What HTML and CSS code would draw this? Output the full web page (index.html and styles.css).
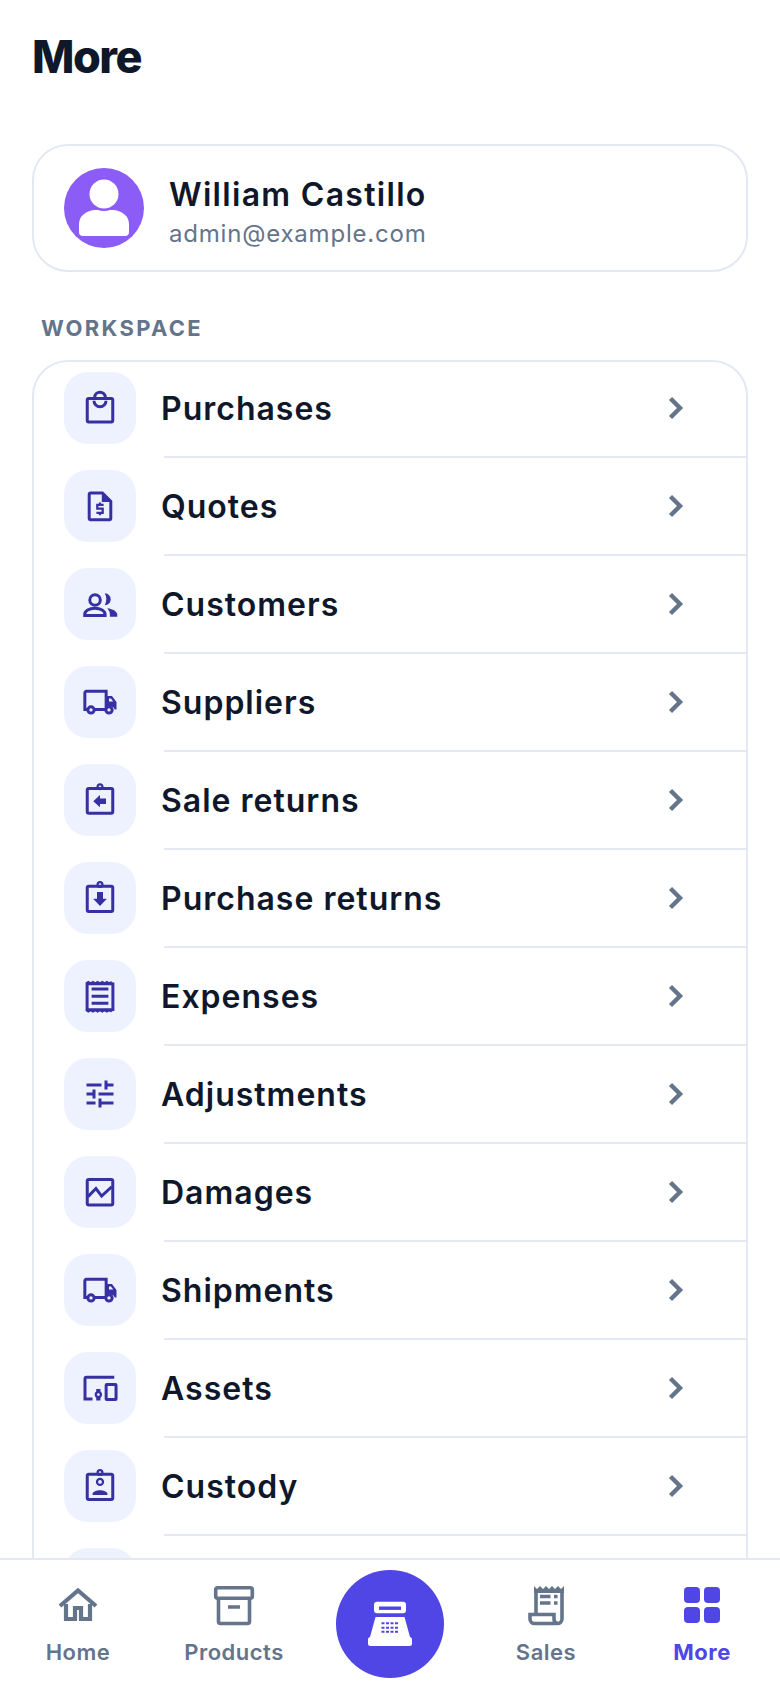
FILE: index.html
```html
<!DOCTYPE html>
<html lang="en">
<head>
<meta charset="utf-8">
<title>More</title>
<link rel="stylesheet" href="styles.css">
</head>
<body>
<div class="app">
  <main class="main">
    <h1 class="title">More</h1>
    <section class="profile">
      <svg class="avatar" viewBox="0 0 80 80">
        <circle cx="40" cy="40" r="40" fill="#8b5cf6"/>
        <path d="M15 64V56C15 48 22 43 30 42H50C58 43 65 48 65 56V64A4 4 0 0 1 61 68H19A4 4 0 0 1 15 64Z" fill="#fff"/>
        <circle cx="40" cy="26" r="17" fill="#8b5cf6"/>
        <circle cx="40" cy="26" r="14.5" fill="#fff"/>
      </svg>
      <div class="who">
        <div class="name">William Castillo</div>
        <div class="email">admin@example.com</div>
      </div>
    </section>
    <div class="section-label">WORKSPACE</div>
    <section class="list">
      <div class="row">
        <div class="tile"><svg class="ico" viewBox="0 0 24 24"><rect class="ln" x="3.500" y="5.700" width="17" height="15.700" rx="1"/><path class="ln" d="M8.500 5.700V4.800a3.500 3.300 0 0 1 7 0v.9M8 7.200a4 4 0 0 0 8 0"/></svg></div>
        <span class="label">Purchases</span>
        <svg class="chev" viewBox="0 0 28 28"><path d="M8.500 4.500l9.500 9.500-9.500 9.500"/></svg>
      </div>
      <div class="row">
        <div class="tile"><svg class="ico" viewBox="0 0 24 24"><path class="ln" d="M5.800 3.300h7.800l5.600 5.600v11.200a1 1 0 0 1-1 1H5.800a1 1 0 0 1-1-1V4.300a1 1 0 0 1 1-1z"/><path class="fl" d="M13.200 3.300h1l5 5v1h-6z"/><path class="ln thin" d="M14.400 11.200h-4.200v2.600h3.600v2.700H9.600M12 9.600v1.600M12 16.500v1.600"/></svg></div>
        <span class="label">Quotes</span>
        <svg class="chev" viewBox="0 0 28 28"><path d="M8.500 4.500l9.500 9.500-9.500 9.500"/></svg>
      </div>
      <div class="row">
        <div class="tile"><svg class="ico" viewBox="0 0 24 24"><circle class="ln" cx="8.700" cy="9.300" r="3.500"/><path class="ln" d="M1.800 19.700V19c0-2.500 3-4.200 6.800-4.200s6.800 1.700 6.800 4.200v.7z"/><path class="fl" d="M15.200 4.900a3.950 3.950 0 0 1 0 7.900a8.500 8.500 0 0 0 0-7.900z"/><path class="fl" d="M16.800 14.800c3.900.5 6.700 2.200 6.700 4.200v1.500h-4.900V19c0-1.600-.6-3-1.800-4.200z"/></svg></div>
        <span class="label">Customers</span>
        <svg class="chev" viewBox="0 0 28 28"><path d="M8.500 4.500l9.500 9.500-9.500 9.500"/></svg>
      </div>
      <div class="row">
        <div class="tile"><svg class="ico" viewBox="0 0 24 24"><path class="ln" d="M3.800 17H1.900V5.900a1 1 0 0 1 1-1h13.200V17H8.200"/><path class="fl" d="M16 8h4l3 4v5h-1.200a3 3 0 0 0-5.600 0H16z"/><path class="notch" d="M18 9.600h1.300l1.500 2.100H18z"/><circle class="ln wheel" cx="6" cy="17.300" r="2.100"/><circle class="ln wheel" cx="18" cy="17.300" r="2.100"/></svg></div>
        <span class="label">Suppliers</span>
        <svg class="chev" viewBox="0 0 28 28"><path d="M8.500 4.500l9.500 9.500-9.500 9.500"/></svg>
      </div>
      <div class="row">
        <div class="tile"><svg class="ico" viewBox="0 0 24 24"><rect class="ln" x="3.500" y="4.400" width="17" height="16.400" rx="1"/><circle class="ln thin" cx="12" cy="3.200" r="1.600"/><path class="fl" d="M7.500 12.800L12 8.700V11h4v3.600h-4v2.300z"/></svg></div>
        <span class="label">Sale returns</span>
        <svg class="chev" viewBox="0 0 28 28"><path d="M8.500 4.500l9.500 9.500-9.500 9.500"/></svg>
      </div>
      <div class="row">
        <div class="tile"><svg class="ico" viewBox="0 0 24 24"><rect class="ln" x="3.500" y="4.200" width="17" height="16.800" rx="1"/><circle class="ln thin" cx="12" cy="3" r="1.600"/><path class="fl" d="M10 8h4v4.500h2.600L12 17.300l-4.600-4.800H10z"/></svg></div>
        <span class="label">Purchase returns</span>
        <svg class="chev" viewBox="0 0 28 28"><path d="M8.500 4.500l9.500 9.500-9.500 9.500"/></svg>
      </div>
      <div class="row">
        <div class="tile"><svg class="ico" viewBox="0 0 24 24"><path class="ln" d="M3.400 3v19M20.600 3v19M3.400 3.800h17.200M3.400 21.200h17.200M6.400 7.300h11.200M6.400 12.100h11.200M6.400 16.900h11.200"/><path class="ln hair" d="M2.700 3.400l1.500-1 1.600 1 1.500-1 1.600 1 1.500-1 1.600 1 1.500-1 1.600 1 1.500-1 1.600 1 1.500-1M2.700 21.600l1.500 1 1.600-1 1.500 1 1.600-1 1.500 1 1.600-1 1.500 1 1.600-1 1.500 1 1.600-1 1.500 1"/></svg></div>
        <span class="label">Expenses</span>
        <svg class="chev" viewBox="0 0 28 28"><path d="M8.500 4.500l9.500 9.500-9.500 9.500"/></svg>
      </div>
      <div class="row">
        <div class="tile"><svg class="ico" viewBox="0 0 24 24"><path class="fl" d="M3 17v2h6v-2H3zM3 5v2h10V5H3zM13 21v-2h8v-2h-8v-2h-2v6h2zM7 9v2H3v2h4v2h2V9H7zM21 13v-2H11v2h10zM15 9h2V7h4V5h-4V3h-2v6z"/></svg></div>
        <span class="label">Adjustments</span>
        <svg class="chev" viewBox="0 0 28 28"><path d="M8.500 4.500l9.500 9.500-9.500 9.500"/></svg>
      </div>
      <div class="row">
        <div class="tile"><svg class="ico" viewBox="0 0 24 24"><rect class="ln" x="3.500" y="3.700" width="17" height="17" rx="1"/><path class="ln" d="M4 15.100l5.300-5.400 3.800 5 6.700-6.200"/></svg></div>
        <span class="label">Damages</span>
        <svg class="chev" viewBox="0 0 28 28"><path d="M8.500 4.500l9.500 9.500-9.500 9.500"/></svg>
      </div>
      <div class="row">
        <div class="tile"><svg class="ico" viewBox="0 0 24 24"><path class="ln" d="M3.800 17H1.900V5.900a1 1 0 0 1 1-1h13.200V17H8.200"/><path class="fl" d="M16 8h4l3 4v5h-1.200a3 3 0 0 0-5.600 0H16z"/><path class="notch" d="M18 9.600h1.300l1.500 2.100H18z"/><circle class="ln wheel" cx="6" cy="17.300" r="2.100"/><circle class="ln wheel" cx="18" cy="17.300" r="2.100"/></svg></div>
        <span class="label">Shipments</span>
        <svg class="chev" viewBox="0 0 28 28"><path d="M8.500 4.500l9.500 9.500-9.500 9.500"/></svg>
      </div>
      <div class="row">
        <div class="tile"><svg class="ico" viewBox="0 0 24 24"><path class="ln" d="M21.500 4.800H3a1 1 0 0 0-1 1v13.600h5"/><rect class="ln" x="16.100" y="9.700" width="6.600" height="10" rx=".4"/><circle class="ln thin" cx="10.900" cy="16.400" r="1.700"/><path class="fl" d="M9.500 12.600h2.800v2.200H9.500zM9.500 18.200h2.800v2.200H9.500z"/></svg></div>
        <span class="label">Assets</span>
        <svg class="chev" viewBox="0 0 28 28"><path d="M8.500 4.500l9.500 9.500-9.500 9.500"/></svg>
      </div>
      <div class="row">
        <div class="tile"><svg class="ico" viewBox="0 0 24 24"><rect class="ln" x="3.500" y="4.200" width="17" height="16.800" rx="1"/><circle class="ln thin" cx="12" cy="3" r="1.600"/><circle class="ln thin" cx="12" cy="9.300" r="2"/><path class="fl" d="M7 18v-.6c0-1.600 3-2.600 5-2.600s5 1 5 2.600v.6z"/></svg></div>
        <span class="label">Custody</span>
        <svg class="chev" viewBox="0 0 28 28"><path d="M8.500 4.500l9.500 9.500-9.500 9.500"/></svg>
      </div>
      <div class="row"><div class="tile"></div></div>
    </section>
  </main>
  <nav class="nav">
    <a class="tab">
      <svg class="tab-ico" viewBox="0 0 48 48"><path class="tab-ln heavy" d="M12 23V38H21V27H27V38H36V23"/><path class="tab-ln heavy" d="M6 25L24 9.500 42 25"/></svg>
      <span class="tab-text">Home</span>
    </a>
    <a class="tab">
      <svg class="tab-ico" viewBox="0 0 48 48"><rect class="tab-ln" x="5.700" y="6.700" width="36.600" height="10.600" rx="2"/><path class="tab-ln" d="M8.500 17.300V40.500a2 2 0 0 0 2 2H37.500a2 2 0 0 0 2-2V17.300M18 26H30"/></svg>
      <span class="tab-text">Products</span>
    </a>
    <div class="fab-cell">
      <button class="fab" type="button" aria-label="Point of sale">
        <svg class="fab-ico" viewBox="0 0 48 48">
          <rect x="8" y="1.700" width="32" height="11.600" rx="3" fill="#fff"/>
          <rect x="13" y="6.500" width="22" height="3.400" fill="#4f46e5"/>
          <path d="M9.500 17H38.500L44 37H4Z" fill="#fff"/>
          <rect x="2" y="37" width="44" height="9" rx="2.500" fill="#fff"/>
          <path d="M15.500 22.300h3v2h-3zM20 22.300h3v2h-3zM24.500 22.300h3v2h-3zM29 22.300h3v2h-3zM15.500 26.700h3v2h-3zM20 26.700h3v2h-3zM24.500 26.700h3v2h-3zM29 26.700h3v2h-3zM15.500 30.700h3v2h-3zM20 30.700h3v2h-3zM24.500 30.700h3v2h-3zM29 30.700h3v2h-3z" fill="#4f46e5"/>
        </svg>
      </button>
    </div>
    <a class="tab">
      <svg class="tab-ico" viewBox="0 0 48 48"><path class="tab-ln" d="M14 33V8M40 8V38a4.500 4.500 0 0 1-4.500 4.500H12.500A4.500 4.500 0 0 1 8 38V33.500H32V38a4.500 4.500 0 0 0 3.500 4.500"/><path class="tab-fill" d="M12 5l3 3 3-3 3 3 3-3 3 3 3-3 3 3 3-3 3 3 3-3v7H12z"/><path class="tab-ln" d="M18 15.500H28.500M18 22H28.500M32 15.500H35.500M32 22H35.500"/></svg>
      <span class="tab-text">Sales</span>
    </a>
    <a class="tab tab-active">
      <svg class="tab-ico" viewBox="0 0 48 48"><rect class="tab-fill" x="6" y="6" width="16" height="16" rx="4"/><rect class="tab-fill" x="26" y="6" width="16" height="16" rx="4"/><rect class="tab-fill" x="6" y="26" width="16" height="16" rx="4"/><rect class="tab-fill" x="26" y="26" width="16" height="16" rx="4"/></svg>
      <span class="tab-text">More</span>
    </a>
  </nav>
</div>
</body>
</html>
```
FILE: styles.css
```css
* { box-sizing: border-box; }
html, body { margin: 0; height: 100%; }
body { background: #fff; color: #0f172a; font-family: Inter, "Liberation Sans", sans-serif; }
.app { height: 1688px; display: flex; flex-direction: column; overflow: hidden; }
.main { flex: 1; min-height: 0; overflow: hidden; padding: 27px 32px 0; }
.title { margin: 0; font-size: 45px; line-height: 60px; font-weight: 800; letter-spacing: -1.5px; }
.profile { margin-top: 57px; height: 128px; display: flex; align-items: center; gap: 25px; padding: 0 30px; border: 2px solid #e4e8f2; border-radius: 36px; }
.avatar { width: 80px; height: 80px; flex: none; }
.who { display: flex; flex-direction: column; gap: 5px; margin-top: 8px; }
.name { font-size: 32px; line-height: 38px; font-weight: 600; letter-spacing: 1.3px; }
.email { font-size: 24px; line-height: 30px; color: #64748b; letter-spacing: .8px; }
.section-label { margin-top: 42px; padding-left: 9px; font-size: 22px; line-height: 28px; font-weight: 700; letter-spacing: 2.3px; color: #64748b; }
.list { margin-top: 18px; border: 2px solid #e4e8f2; border-radius: 36px; padding: 0 0 0 30px; }
.row { position: relative; height: 98px; padding: 12px 56px 14px 0; display: flex; align-items: center; gap: 25px; }
.row:first-child { margin-top: -2px; }
.row::after { content: ""; position: absolute; left: 100px; right: 0; bottom: 0; height: 2px; background: #e4e8f2; }
.tile { width: 72px; height: 72px; flex: none; border-radius: 24px; background: #eef2ff; display: flex; align-items: center; justify-content: center; }
.ico { width: 36px; height: 36px; }
.ln { fill: none; stroke: #3730a3; stroke-width: 2; }
.wheel { fill: #eef2ff; }
.thin { stroke-width: 1.5; }
.hair { stroke-width: 1; }
.fl { fill: #3730a3; }
.notch { fill: #eef2ff; }
.label { flex: 1; padding-top: 2px; font-size: 32px; line-height: 40px; font-weight: 600; letter-spacing: 1px; }
.chev { width: 28px; height: 28px; flex: none; }
.chev path { fill: none; stroke: #64748b; stroke-width: 4.4; }
.nav { flex: none; height: 130px; border-top: 2px solid #e4e8f2; background: #fff; display: grid; grid-template-columns: repeat(5, 1fr); }
.tab { display: flex; flex-direction: column; align-items: center; padding-top: 21px; color: #64748b; }
.tab-ico { width: 48px; height: 48px; flex: none; }
.tab-ln { fill: none; stroke: #64748b; stroke-width: 3.6; }
.heavy { stroke-width: 4.2; }
.tab-fill { fill: #64748b; }
.tab-text { margin-top: 10px; font-size: 22px; line-height: 26px; font-weight: 600; letter-spacing: .5px; }
.tab-active { color: #4f46e5; }
.tab-active .tab-fill { fill: #4f46e5; }
.tab-active .tab-text { font-weight: 700; }
.fab-cell { display: flex; justify-content: center; padding-top: 10px; }
.fab { width: 108px; height: 108px; border: 0; padding: 0; border-radius: 50%; background: #4f46e5; display: flex; align-items: center; justify-content: center; }
.fab-ico { width: 48px; height: 48px; }
```
